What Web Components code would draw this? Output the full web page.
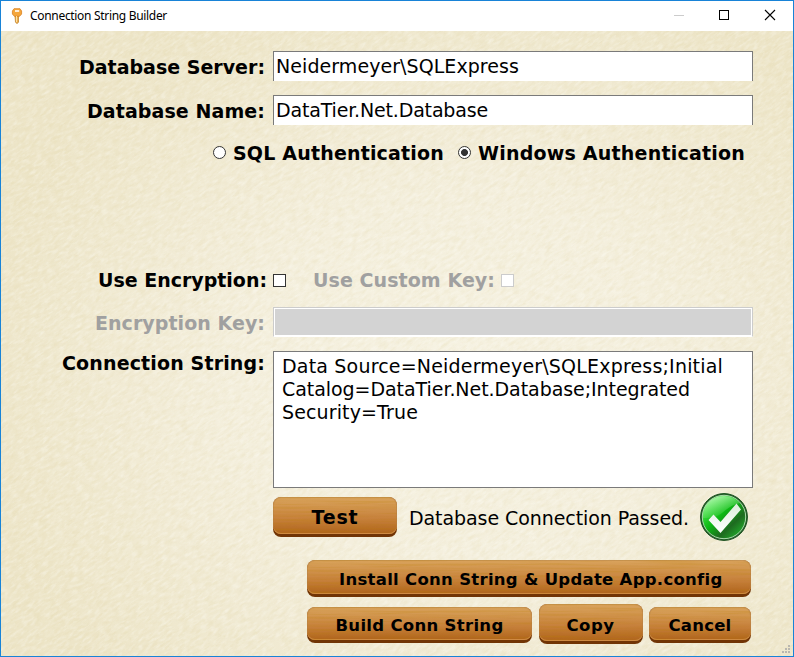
<!DOCTYPE html>
<html lang="en"><head><meta charset="utf-8"><title>Connection String Builder</title>
<style>
html,body{margin:0;width:794px;height:657px;overflow:hidden}
body{font:19px/23px Verdana,"DejaVu Sans",sans-serif;color:#000}
form-row.s1{margin-top:20px}form-row.s2{margin-top:14px}
</style></head><body>
<app-window>
  <fit-text slot="title" w="137">Connection String Builder</fit-text>
  <form-row class="s1" h="30"><fit-text slot="label" bold w="186">Database Server:</fit-text><text-field><fit-text w="243">Neidermeyer\SQLExpress</fit-text></text-field></form-row>
  <form-row class="s2" h="30"><fit-text slot="label" bold w="178">Database Name:</fit-text><text-field><fit-text w="212">DataTier.Net.Database</fit-text></text-field></form-row>
  <radio-row><radio-item><fit-text bold w="211">SQL Authentication</fit-text></radio-item><radio-item checked><fit-text bold w="267">Windows Authentication</fit-text></radio-item></radio-row>
  <form-row h="24" style="margin-top:103px;--shift:2px"><fit-text slot="label" bold w="169">Use Encryption:</fit-text><check-item></check-item><fit-text bold w="182" style="color:#a0a0a0;margin:0 6px 0 27px">Use Custom Key:</fit-text><check-item disabled></check-item></form-row>
  <form-row h="30" style="margin-top:15px;color:#a0a0a0"><fit-text slot="label" bold w="170">Encryption Key:</fit-text><text-field disabled></text-field></form-row>
  <form-row class="s2" h="137" top><fit-text slot="label" bold w="203">Connection String:</fit-text><text-field multi><fit-text w="441">Data Source=Neidermeyer\SQLExpress;Initial</fit-text><fit-text w="408">Catalog=DataTier.Net.Database;Integrated</fit-text><fit-text w="136">Security=True</fit-text></text-field></form-row>
  <form-row h="48" style="margin-top:5px"><wood-button style="width:124px;height:40px"><fit-text bold w="47">Test</fit-text></wood-button><fit-text w="280" style="margin:3px 11px 0 12px">Database Connection Passed.</fit-text><pass-icon></pass-icon></form-row>
  <button-row style="margin-top:16px"><wood-button style="width:444px;height:37px"><fit-text bold w="383" style="margin-left:3px">Install Conn String &amp; Update App.config</fit-text></wood-button></button-row>
  <button-row style="margin-top:7px"><wood-button style="width:225px;height:36px;margin-bottom:1px"><fit-text bold w="168">Build Conn String</fit-text></wood-button><wood-button style="width:104px;height:40px;--drop:1px"><fit-text bold w="48">Copy</fit-text></wood-button><wood-button style="width:102px;height:36px;margin-bottom:1px"><fit-text bold w="63">Cancel</fit-text></wood-button></button-row>
</app-window>
<script>
const def=(name,html,init)=>customElements.define(name,class extends HTMLElement{
  connectedCallback(){
    if(this.shadowRoot)return;
    this.attachShadow({mode:'open'}).innerHTML=html;
    if(init)init(this,this.shadowRoot);
  }
});

def('app-window',`<style>
:host{display:flex;flex-direction:column;box-sizing:border-box;width:794px;height:657px;border:1px solid #1883d7;background:#fff;position:relative}
header{height:30px;display:flex;align-items:center;flex:none;font:12px/16px "Segoe UI","Noto Sans",sans-serif}
.key{margin:0 7px 0 10px;flex:none}
.ctl{margin-left:auto}
main{flex:1;position:relative;overflow:hidden;background:radial-gradient(ellipse 62% 66% at 58% 56%,#f6f2e2 0%,#f4efdd 45%,#ede5c8 100%)}
.paper{position:absolute;inset:0}
.content{position:relative;display:flex;flex-direction:column}
.grip{position:absolute;right:2px;bottom:2px}
</style>
<header>
<svg class="key" width="12" height="16" viewBox="0 0 12 16"><path d="M4 8h3.500v6.300L6 15.600 4.500 14.300z" fill="#efb04b" stroke="#b97820" stroke-width=".7"/><path d="M3 .7h6L10.600 3v3L8.600 8.300H3.400L1.400 6V3z" fill="#f5a63b" stroke="#d9821f" stroke-width=".8"/><path d="M4 3h4.200" stroke="#fff" stroke-width="1.6"/><path d="M5.500 8v6" stroke="#ffe0a0"/></svg>
<slot name="title"></slot>
<svg class="ctl" width="120" height="30" viewBox="0 0 120 30" shape-rendering="crispEdges"><path d="M1 14.500h10" stroke="#ccc"/><rect x="46.500" y="9.500" width="9" height="9" fill="none" stroke="#000"/><path d="M92 9l10 10m0-10L92 19" stroke="#000" stroke-width="1.1" shape-rendering="auto"/></svg>
</header>
<main>
<svg class="paper" width="792" height="625"><filter id="p" x="0" y="0" width="100%" height="100%"><feTurbulence type="fractalNoise" baseFrequency=".1 .3" numOctaves="5" seed="8"/><feColorMatrix values="0 0 0 0 .72  0 0 0 0 .62  0 0 0 0 .32  1 0 0 0 -.4"/></filter><filter id="q" x="0" y="0" width="100%" height="100%"><feTurbulence type="fractalNoise" baseFrequency=".14 .4" numOctaves="4" seed="21"/><feColorMatrix values="0 0 0 0 1  0 0 0 0 1  0 0 0 0 .96  0 2 0 0 -.85"/></filter><g transform="rotate(-35 396 312)"><rect x="-200" y="-200" width="1200" height="1050" filter="url(#p)" opacity=".45"/><rect x="-200" y="-200" width="1200" height="1050" filter="url(#q)" opacity=".4"/></g></svg>
<div class="content"><slot></slot></div>
<svg class="grip" width="9" height="9" fill="#b9b7b0"><path d="M6 0h2v2H6zM3 3h2v2H3zM6 3h2v2H6zM0 6h2v2H0zM3 6h2v2H3zM6 6h2v2H6z"/></svg>
</main>`);

def('form-row',`<style>
:host{display:flex;align-items:center}
.label{width:264px;margin-right:8px;flex:none;display:flex;justify-content:flex-end;position:relative;left:var(--shift,0)}
:host([top]){align-items:flex-start}
:host([top]) .label{padding-top:1px}
:host([h="30"]) .label{padding-top:2px}
</style><div class="label"><slot name="label"></slot></div><slot></slot>`,(e)=>{e.style.height=e.getAttribute('h')+'px'});

def('text-field',`<style>
:host{display:flex;box-sizing:border-box;width:480px;height:30px;background:#fff;border:1px solid #7a7a7a;border-bottom:0;padding:3px 0 0 2px;color:#000}
:host([disabled]){background:#d3d3d3;border-color:#ccc;border-bottom:1px solid #fff;box-shadow:inset 0 0 0 1px #fff}
:host([multi]){flex-direction:column;height:137px;border-bottom:1px solid #7a7a7a;padding:3px 0 0 8px}
</style><slot></slot>`);

def('radio-row',`<style>:host{display:flex;height:24px;margin-top:16px;padding-left:212px;gap:14px}</style><slot></slot>`);
def('radio-item',`<style>
:host{display:flex;align-items:center;gap:7px}
i{box-sizing:border-box;width:13px;height:13px;border:1px solid #333;border-radius:50%;background:#fff;flex:none;margin-bottom:1px}
:host([checked]) i{background:radial-gradient(circle,#333 0 3.1px,#fff 3.8px)}
</style><i></i><slot></slot>`);
def('check-item',`<style>
:host{display:block;box-sizing:border-box;width:13px;height:13px;border:1px solid #333;background:#fff;flex:none}
:host([disabled]){border-color:#ccc}
</style>`);

def('button-row',`<style>:host{display:flex;align-items:flex-end;justify-content:flex-end;gap:6.500px;height:40px;margin-right:42px;font-size:16.5px}</style><slot></slot>`);
def('wood-button',`<style>
:host{display:flex;align-items:center;justify-content:center;box-sizing:border-box;flex:none;border-radius:8px;background:linear-gradient(#a9672c,#713405 85%);position:relative;overflow:hidden}
.face{position:absolute;inset:0 0 3px;border-radius:8px;box-shadow:inset 0 -1px #cf8a43,inset 0 0 0 1px #b0804a66;overflow:hidden;
background:linear-gradient(#d9a35d 0,#d2964f 25%,#c6803b 60%,#b2671f 95%)}
svg{position:absolute;inset:0;width:100%;height:100%}
.t{position:relative;top:var(--drop,0);margin-top:1px}
</style><div class="face"><svg><filter id="g" x="0" y="0" width="100%" height="100%"><feTurbulence type="fractalNoise" baseFrequency=".015 .5" numOctaves="2" seed="5"/><feColorMatrix values="0 0 0 0 .5  0 0 0 0 .22  0 0 0 0 0  1 0 0 0 -.42"/></filter><rect width="100%" height="100%" filter="url(#g)" opacity=".6"/></svg></div><div class="t"><slot></slot></div>`);

def('pass-icon',`<style>:host{display:block;width:48px;height:48px;flex:none}svg{display:block}</style>
<svg width="48" height="48" viewBox="0 0 48 48"><defs><linearGradient id="a" x1=".1" y1=".1" x2=".85" y2=".9"><stop offset="0" stop-color="#58f058"/><stop offset=".45" stop-color="#0cb813"/><stop offset=".75" stop-color="#1e6a20"/><stop offset="1" stop-color="#22a52a"/></linearGradient><linearGradient id="b" x1="0" y1="0" x2=".6" y2="1"><stop offset="0" stop-color="#dfffdc" stop-opacity=".85"/><stop offset="1" stop-color="#62e562" stop-opacity=".1"/></linearGradient><linearGradient id="c" x1="0" y1="1" x2="0" y2="0"><stop offset="0" stop-color="#fff"/><stop offset="1" stop-color="#dceedb"/></linearGradient></defs>
<circle cx="24" cy="24" r="23.400" fill="#24602a" stroke="#174d1b"/><circle cx="24" cy="24" r="21.700" fill="url(#a)" stroke="#a9d9a9" stroke-width="1"/><path d="M3 25C2 12 12 3 24 3c7 0 12 3 16 7-8 2-12 5-18 10-5 4-11 5-19 5z" fill="url(#b)"/><path d="M8.500 27L13.500 21.500l7 7.500L36.500 10.500l4.500 6L20.500 40z" fill="url(#c)"/></svg>`);

/* Text run whose tracking is adjusted so that it fills the width given in "w". */
def('fit-text',`<style>:host{display:block;flex:none;white-space:pre}:host([bold]){font-weight:bold}span{display:inline-block}</style><span><slot></slot></span>`,(e,r)=>{
  const w=+e.getAttribute('w'),s=r.querySelector('span');
  e.style.width=w+'px';
  e.fit=()=>{s.style.letterSpacing=(w-s.getBoundingClientRect().width)/e.textContent.length+'px'};
});
document.querySelectorAll('fit-text').forEach(e=>e.fit());
</script></body></html>
